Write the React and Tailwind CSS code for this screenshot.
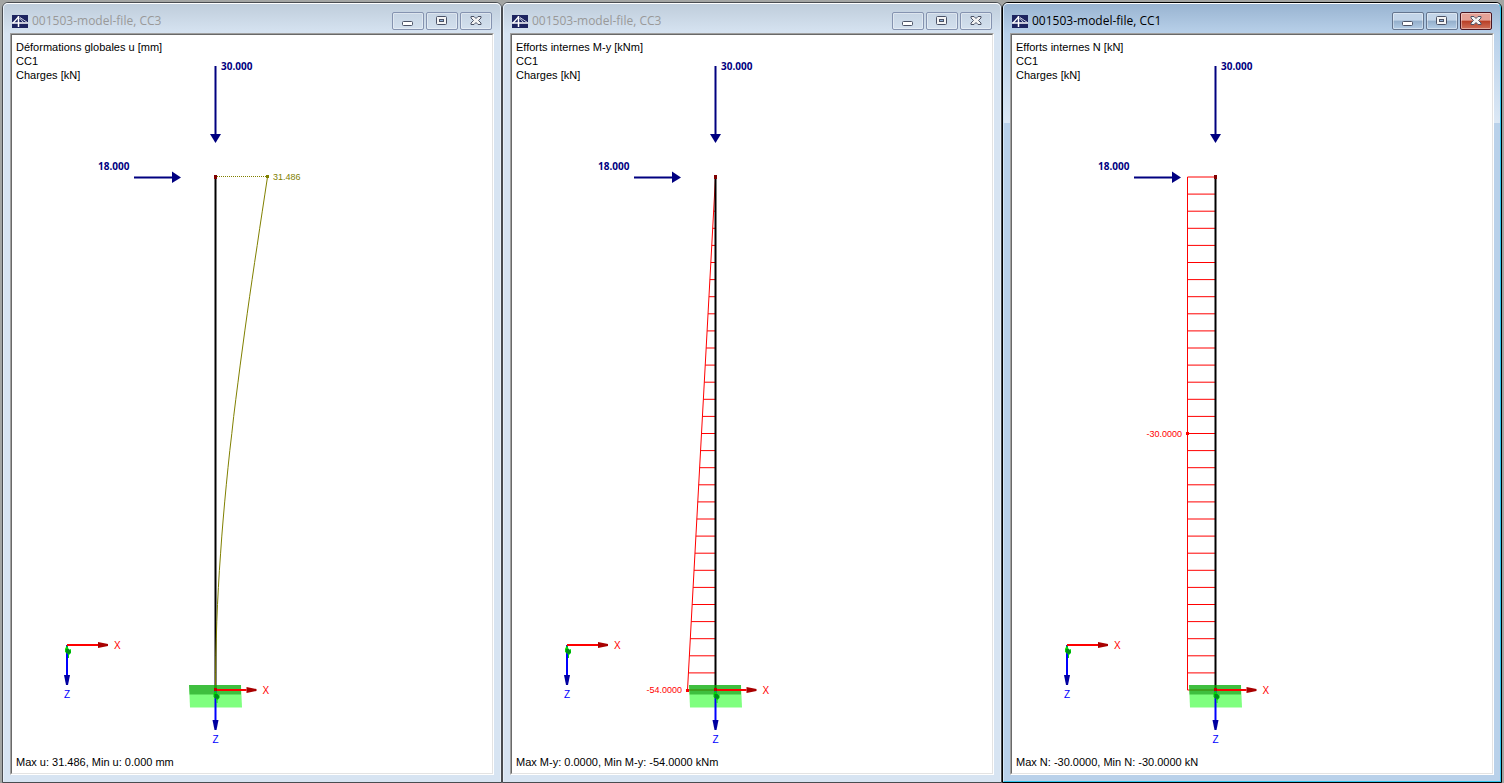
import React from 'react';

// vertical member: top and fixed end, in drawing coordinates
const TOP = 177;
const BASE = 690;
const AXIS = 215.5;
const STEPS = 30;

const windows = [
  {
    id: 'u',
    title: '001503-model-file, CC3',
    active: false,
    lines: ['Déformations globales u [mm]', 'CC1', 'Charges [kN]'],
    summary: 'Max u: 31.486, Min u: 0.000 mm',
  },
  {
    id: 'my',
    title: '001503-model-file, CC3',
    active: false,
    lines: ['Efforts internes M-y [kNm]', 'CC1', 'Charges [kN]'],
    summary: 'Max M-y: 0.0000, Min M-y: -54.0000 kNm',
  },
  {
    id: 'n',
    title: '001503-model-file, CC1',
    active: true,
    lines: ['Efforts internes N [kN]', 'CC1', 'Charges [kN]'],
    summary: 'Max N: -30.0000, Min N: -30.0000 kN',
  },
];

function AppIcon() {
  return (
    <svg width="16" height="13" viewBox="0 0 16 13" aria-hidden="true" className="shrink-0">
      <rect width="16" height="13" fill="#1d2460" />
      <g stroke="#fff" fill="none">
        <path d="M0 8H16" strokeWidth="1.5" />
        <path d="M6.5 1V12" strokeWidth="1.5" />
        <path d="M6.5 2L1 8" strokeWidth="1.3" />
        <path d="M7.5 3L11.5 7.5M8 2.5L15.5 7.5" strokeWidth="0.9" stroke="#dfe2ef" />
      </g>
    </svg>
  );
}

function CaptionButton({ kind, active }) {
  const stroke = '#4b5266';
  let look = 'border-[#8593b0] bg-linear-to-b from-[#c6d4e3] to-[#d3e0ee]';
  if (active) {
    look = 'border-[#64758f] bg-linear-to-b from-[#c3d5e9] from-45% via-[#93aeca] via-50% to-[#b4cde6]';
    if (kind === 'Close') {
      look = 'border-[#4a1420] bg-linear-to-b from-[#e5a197] from-45% via-[#b83d24] via-50% to-[#d0705a]';
    }
  }
  return (
    <button
      type="button"
      aria-label={kind}
      className={`flex h-[18px] w-8 items-center justify-center rounded-[2px] border inset-ring inset-ring-white/40 ${look}`}
    >
      <svg width="12" height="10" viewBox="0 0 12 10" aria-hidden="true">
        {kind === 'Minimize' && (
          <rect x="0.5" y="5.5" width="10" height="4" rx="1" fill="#fff" stroke={stroke} />
        )}
        {kind === 'Restore' && (
          <>
            <rect x="0.5" y="0.5" width="10" height="8" rx="1" fill="#f4f4f4" stroke={stroke} />
            <rect x="3.5" y="3.5" width="4" height="2" fill="#8fb0d8" stroke={stroke} />
          </>
        )}
        {kind === 'Close' && (
          <path
            d="M1 0.5H4L6 2.5L8 0.5H11V2L8.5 4.5L11 7V8.5H8L6 6.5L4 8.5H1V7L3.5 4.5L1 2Z"
            fill="#f4f4f4"
            stroke={stroke}
          />
        )}
      </svg>
    </button>
  );
}

// X / Z axes with the small green Y axis pointing at the viewer
function Axes({ x, y }) {
  return (
    <g transform={`translate(${x} ${y})`}>
      <path d="M0 0V31" stroke="#0000ff" strokeWidth="2" />
      <path d="M-3 30H3L1 40H-1Z" fill="#0000a0" />
      <path d="M0 0L2 5L4 4V8L2 10V13H1V9L-2 7V4Z" fill="#00dc00" />
      <path d="M-1 4H2L4 7L2 9L-1 8Z" fill="#008c1c" />
      <path d="M0 0H31" stroke="#ff0000" strokeWidth="2" />
      <path d="M31 -3L41 -1V1L31 3Z" fill="#a80000" />
      <text x="47" y="4" fontSize="10" fill="#ff0000">X</text>
      <text x="-3" y="53" fontSize="10" fill="#0000ff">Z</text>
    </g>
  );
}

function Loads() {
  return (
    <g fill="#000080" fontFamily="Noto Sans, sans-serif" fontSize="10" fontWeight="700">
      <path d="M215.5 66V135" stroke="#000080" strokeWidth="2" />
      <path d="M210 134H221L215.5 143Z" />
      <text x="221" y="70">30.000</text>
      <path d="M134 177.5H173" stroke="#000080" strokeWidth="2" />
      <path d="M172 171.5L181 177.5L172 183Z" />
      <text x="98" y="170">18.000</text>
    </g>
  );
}

function Deformation() {
  const points = [];
  for (let i = 0; i <= STEPS; i++) {
    const s = i / STEPS;
    const u = (52 * (3 * s * s - s * s * s)) / 2;
    points.push(`${(AXIS + u).toFixed(1)},${(BASE - s * (BASE - TOP)).toFixed(1)}`);
  }
  return (
    <g>
      <path d="M217 176.5H267" stroke="#808000" strokeDasharray="1 1" />
      <polyline points={points.join(' ')} fill="none" stroke="#808000" />
      <rect x="266" y="175" width="3" height="3" fill="#808000" />
      <text x="273" y="180" fontSize="9" fill="#808000">31.486</text>
    </g>
  );
}

function ForceDiagram({ constant }) {
  const ordinates = [];
  for (let i = constant ? 0 : 1; i <= STEPS; i++) {
    const y = (TOP + (i * (BASE - TOP)) / STEPS).toFixed(1);
    const w = constant ? 28 : (28 * i) / STEPS;
    ordinates.push(<path key={i} d={`M${AXIS - w} ${y}H${AXIS}`} />);
  }
  return (
    <g>
      <g stroke="#ff0000" fill="none">
        {ordinates}
        <path d={constant ? 'M187.5 177V690' : 'M215.5 177L187.5 690'} />
      </g>
      <rect x="186" y={constant ? 432 : 689} width="3" height="3" fill="#ff0000" />
      <text x="182" y={constant ? 437 : 693} fontSize="9" textAnchor="end" fill="#ff0000">
        {constant ? '-30.0000' : '-54.0000'}
      </text>
    </g>
  );
}

function Drawing({ id }) {
  return (
    <svg
      viewBox="12 35 480 738"
      className="absolute inset-0 size-full"
      fontFamily="Liberation Sans, Arial, sans-serif"
    >
      <Loads />
      {id === 'my' && <ForceDiagram />}
      {id === 'n' && <ForceDiagram constant />}
      <path d="M215.5 177V690" stroke="#000" strokeWidth="2" />
      {id === 'u' && <Deformation />}
      <rect x="214" y="175" width="3" height="4" fill="#800000" />
      <path d="M189 685H241L242 707.5H190Z" fill="#00ff00" fillOpacity="0.5" />
      <path d="M189 685H241V694.5H189.5Z" fill="#008000" fillOpacity="0.5" />
      <Axes x={67} y={645} />
      <Axes x={215.5} y={690} />
      <rect x="214" y="688" width="3" height="3" fill="#c00000" />
    </svg>
  );
}

function ModelWindow({ win }) {
  const { active } = win;
  return (
    <section
      className={`flex flex-col rounded-t-md border ${
        active ? 'border-black bg-[#b9d1ea]' : 'border-[#494c50] bg-[#d7e4f2]'
      }`}
    >
      <div
        className={`flex grow flex-col rounded-t-[5px] border border-t-white px-[6px] pb-[6px] ${
          active
            ? 'border-r-[#33c5ee] border-b-[#33c5ee] border-l-[#d5e8f8] bg-[linear-gradient(#99b4d1,#b9d1ea_30px,#dce8f5_119px,#b9d1ea_119px)]'
            : 'border-x-[#e8f0f8] border-b-[#d7e4f2] bg-[linear-gradient(#bfcddb,#d7e4f2_30px)]'
        }`}
      >
        <header className="flex h-[29px] items-center gap-1 pt-[6px] pr-[2px] pb-px pl-[2px]">
          <AppIcon />
          <h2
            className={`grow font-['Open_Sans','Noto_Sans',sans-serif] text-[12px] leading-4 ${
              active ? 'text-black' : 'text-[#999]'
            }`}
          >
            {win.title}
          </h2>
          <div className="flex gap-[2px]">
            <CaptionButton kind="Minimize" active={active} />
            <CaptionButton kind="Restore" active={active} />
            <CaptionButton kind="Close" active={active} />
          </div>
        </header>
        <div className="flex grow flex-col border border-t-[#a0a0a0] border-r-white border-b-white border-l-[#a0a0a0]">
          <div className="relative flex grow flex-col justify-between border border-t-[#696969] border-r-[#e3e3e3] border-b-[#e3e3e3] border-l-[#696969] bg-white px-1 pt-[5px] pb-1 font-['Liberation_Sans',Arial,sans-serif] text-[11px] leading-[14px] text-black">
            <Drawing id={win.id} />
            <div className="relative">
              {win.lines.map((line) => (
                <p key={line}>{line}</p>
              ))}
            </div>
            <p className="relative">{win.summary}</p>
          </div>
        </div>
      </div>
    </section>
  );
}

export default function App() {
  return (
    <main className="grid min-h-screen grid-cols-3 bg-[#a3a5a3] px-[2px] pt-[2px]">
      {windows.map((win) => (
        <ModelWindow key={win.id} win={win} />
      ))}
    </main>
  );
}
